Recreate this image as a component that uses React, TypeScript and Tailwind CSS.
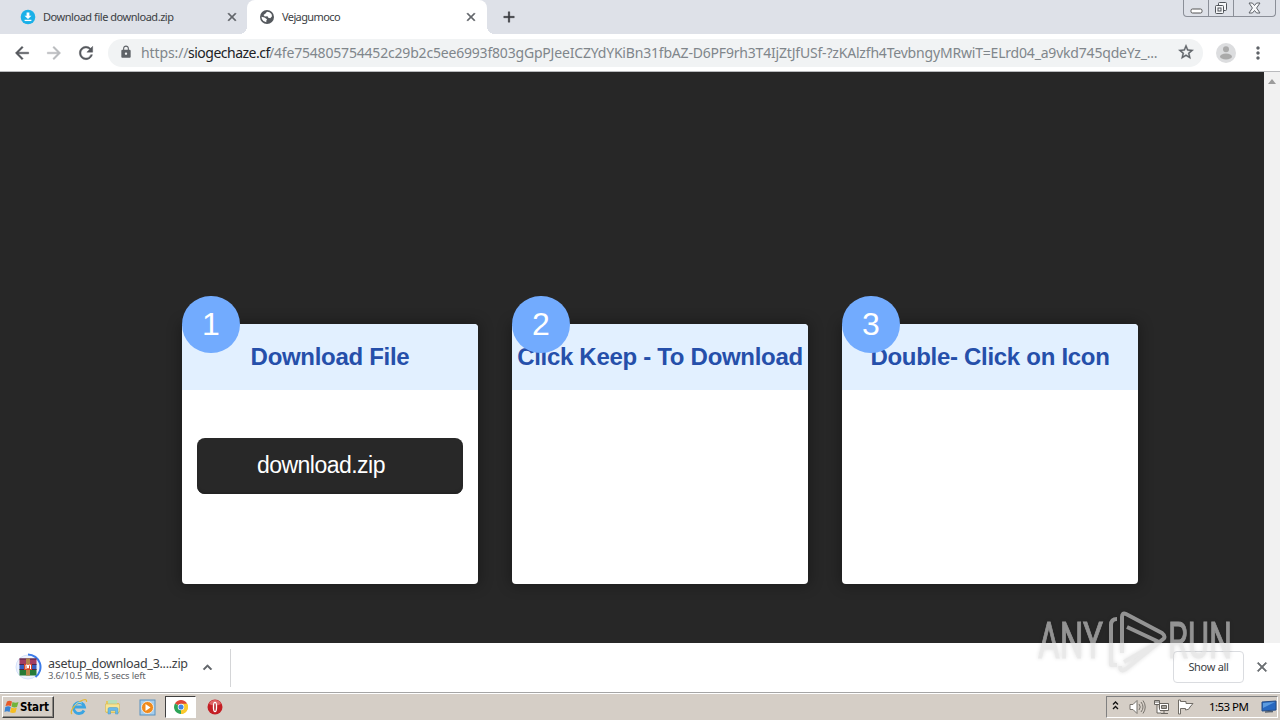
import React from "react";
import {
  MdAdd,
  MdArrowBack,
  MdArrowForward,
  MdClose,
  MdKeyboardArrowUp,
  MdLock,
  MdMoreVert,
  MdRefresh,
  MdStarBorder,
} from "react-icons/md";

const steps = [
  { number: 1, title: "Download File", file: "download.zip" },
  { number: 2, title: "Click Keep - To Download" },
  { number: 3, title: "Double- Click on Icon" },
];

const GlobeIcon = () => (
  <svg width="14" height="14" viewBox="0 0 14 14" className="shrink-0">
    <circle cx="7" cy="7" r="7" fill="#55595e" />
    <path d="M7 1.800 5.500 3.500 3.500 5l1.300 1.500L7.500 6.300l.8 1.500 2 .5 1.700-2L11.500 4 9.500 2.200z" fill="#fff" />
    <path d="m1.500 6.800 3 .8 2.500 1.700-.7 1.400v1.600L3.400 11 1.900 9z" fill="#fff" />
  </svg>
);

const DownloadFavicon = () => (
  <svg width="16" height="16" viewBox="0 0 16 16" className="shrink-0">
    <circle cx="8" cy="8" r="7.3" fill="#1ab0e8" />
    <path d="M6.6 3.5h2.8v3.2h2.1L8 10 4.5 6.7h2.1z" fill="#fff" />
    <path d="M4.6 11.4h6.8" stroke="#fff" strokeWidth="1.3" />
  </svg>
);

const WindowControls = () => (
  <div className="flex h-[17px] w-[93px] rounded-b-[4px] border border-t-0 border-[#8b8f98]">
    <div className="flex w-[25px] items-end justify-center border-r border-[#8b8f98] pb-[2px]">
      <svg width="13" height="6" viewBox="0 0 13 6">
        <rect x="1" y="1" width="11" height="4" rx="1.5" fill="#fff" stroke="#555" />
      </svg>
    </div>
    <div className="flex w-[25px] items-end justify-center border-r border-[#8b8f98] pb-[1px]">
      <svg width="14" height="14" viewBox="0 0 14 14" fill="#f6f7f9" stroke="#50545a">
        <rect x="4.5" y="1.5" width="8" height="8" rx="1" />
        <rect x="1.5" y="4.5" width="8" height="8" rx="1" />
        <rect x="4" y="7" width="3" height="3" />
      </svg>
    </div>
    <div className="flex flex-1 items-center justify-center">
      <svg width="13" height="12" viewBox="0 0 13 12">
        <path
          d="M1 1h3.4l2.1 2.5L8.6 1H12L8.6 6 12 11H8.6L6.5 8.5 4.4 11H1l3.4-5z"
          fill="#f6f7f9"
          stroke="#60646a"
          strokeWidth="1"
        />
      </svg>
    </div>
  </div>
);

const TabStrip = () => (
  <div className="flex h-[34px] bg-[#dee1e8]">
    <div className="flex w-[247px] items-center pl-[20px]">
      <DownloadFavicon />
      <span className="ml-[7px] w-[182px] text-[11px] tracking-[-0.46px] text-[#3c4043]">
        Download file download.zip
      </span>
      <MdClose className="h-[14px] w-[14px] stroke-current stroke-1 text-[#5f6368] [&>path[fill=none]]:stroke-none" />
    </div>
    <div className="relative flex w-[240px] items-center rounded-t-[8px] bg-white pl-[13px]">
      <span className="absolute bottom-0 -left-2 h-2 w-2 bg-[radial-gradient(circle_at_0_0,transparent_8px,white_8px)]" />
      <span className="absolute -right-2 bottom-0 h-2 w-2 bg-[radial-gradient(circle_at_100%_0,transparent_8px,white_8px)]" />
      <GlobeIcon />
      <span className="ml-[8px] w-[182px] text-[11px] tracking-[-0.6px] text-[#3c4043]">
        Vejagumoco
      </span>
      <MdClose className="h-[14px] w-[14px] stroke-current stroke-1 text-[#5f6368] [&>path[fill=none]]:stroke-none" />
    </div>
    <MdAdd className="mt-[8px] ml-[13px] h-[18px] w-[18px] stroke-current stroke-[0.5] text-[#35363a] [&>path[fill=none]]:stroke-none" />
    <div className="mr-[4px] ml-auto">
      <WindowControls />
    </div>
  </div>
);

const Toolbar = () => (
  <div className="flex h-[38px] items-center border-b border-[#b9babd] bg-white">
    <MdArrowBack className="ml-[12px] h-5 w-5 stroke-current stroke-[0.5] text-[#55585d] [&>path[fill=none]]:stroke-none" />
    <MdArrowForward className="ml-[12px] h-5 w-5 stroke-current stroke-[0.5] text-[#b9bbbe] [&>path[fill=none]]:stroke-none" />
    <MdRefresh className="ml-[12px] h-5 w-5 stroke-current stroke-[0.5] text-[#55585d] [&>path[fill=none]]:stroke-none" />
    <div className="ml-[12px] flex h-[28px] w-[1095px] items-center rounded-full bg-[#f1f3f4] pb-px pl-[11px] text-[14px] whitespace-nowrap text-[#80868b]">
      <MdLock className="h-[14px] w-[14px] text-[#5f6368]" />
      <span className="ml-[8px] w-[47px] tracking-[-0.1px]">https://</span>
      <span className="w-[81px] tracking-[-0.5px] text-[#202124]">siogechaze.cf</span>
      <span className="w-[908px] tracking-[-0.19px]">
        /4fe754805754452c29b2c5ee6993f803gGpPJeeICZYdYKiBn31fbAZ-D6PF9rh3T4IjZtJfUSf-?zKAlzfh4TevbngyMRwiT=ELrd04_a9vkd745qdeYz_...
      </span>
      <MdStarBorder className="h-[18px] w-[18px] stroke-current stroke-[0.5] text-[#5f6368] [&>path[fill=none]]:stroke-none" />
    </div>
    <svg width="20" height="20" viewBox="0 0 20 20" className="ml-[13px]">
      <circle cx="10" cy="10" r="10" fill="#dcdddf" />
      <circle cx="10" cy="6.3" r="3" fill="#aaa" />
      <ellipse cx="10" cy="13.5" rx="6" ry="3" fill="#aaa" />
    </svg>
    <MdMoreVert className="ml-[12px] h-5 w-5 text-[#5f6368]" />
  </div>
);

const StepCard = ({ number, title, file }: { number: number; title: string; file?: string }) => (
  <div className="relative h-[260px] w-[296px] rounded-[4px] bg-white shadow-[0_0_14px_2px_rgba(0,0,0,0.3)]">
    <div className="flex h-[66px] items-center justify-center rounded-t-[4px] bg-[#e2f0ff] text-[24px] font-bold tracking-[-0.3px] whitespace-nowrap text-[#254faa]">
      {title}
    </div>
    <div className="absolute -top-[28px] left-0 flex h-[57px] w-[58px] items-center justify-center rounded-full bg-[#72abfe] pb-[2px] text-[32px] text-white">
      {number}
    </div>
    {file && (
      <button className="mt-[48px] ml-[15px] flex h-[56px] w-[266px] items-center rounded-[8px] bg-[#282828] pb-[2px] pl-[60px] text-[23px] tracking-[-0.53px] text-white shadow-[inset_0_-2px_2px_#222222]">
        {file}
      </button>
    )}
  </div>
);

const Watermark = () => (
  <svg
    width="200"
    height="68"
    viewBox="0 0 200 68"
    className="absolute top-[606px] left-[1036px] drop-shadow-[0_0_2px_rgba(0,0,0,0.2)]"
    fill="#dcdcdc"
    opacity="0.6"
    fontFamily="Roboto"
    fontSize="50"
  >
    <g stroke="#dcdcdc" strokeWidth="1">
      <text x="2" y="52" textLength="65" lengthAdjust="spacingAndGlyphs">ANY</text>
      <text x="132" y="52" textLength="64" lengthAdjust="spacingAndGlyphs">RUN</text>
    </g>
    <path
      d="M81 13q-6 0-6 6v40h6M86 47V11q0-5 4-3l36 19q5 4 0 7L90 63q-6 4-6-3M91 21l32 15-35 20"
      fill="none"
      stroke="#dcdcdc"
      strokeWidth="4"
      strokeLinejoin="round"
    />
  </svg>
);

const WinRarIcon = () => (
  <svg width="28" height="28" viewBox="0 0 28 28" className="-mt-[2px]">
    <circle cx="14" cy="14" r="12" fill="#edf2fc" stroke="#d5e2fb" strokeWidth="1" />
    <path d="M14 1.500A12.500 12.500 0 0 1 21.500 24" fill="none" stroke="#3b7bea" strokeWidth="2" />
    <path d="M5.500 5.500h17v5.500h-17z" fill="#a33c61" />
    <path d="M5.500 11h17v5h-17z" fill="#385fc0" />
    <path d="M5.500 16h17v6.500h-17z" fill="#267a37" />
    <path d="M5.500 6h17M5.500 11.500h17M5.500 16.500h17" stroke="#4b2448" strokeWidth="1" />
    <path d="M12 5.500h4v17h-4z" fill="#b58449" />
    <path d="M10 11h8v6h-8z" fill="#d54727" />
    <path d="M12 16v-4h1.500v3h1v-3h2v4" fill="none" stroke="#fff" />
  </svg>
);

const DownloadBar = () => (
  <div className="flex h-[50px] items-center border-b border-[#a5a5a5] bg-white">
    <div className="flex h-[38px] w-[231px] items-center border-r border-[#d4d5d7] pl-[14px]">
      <WinRarIcon />
      <div className="mt-[4px] ml-[6px] w-[151px] whitespace-nowrap">
        <div className="text-[12.5px] leading-[12px] tracking-[-0.28px] text-[#3c4043]">asetup_download_3....zip</div>
        <div className="text-[9.5px] leading-[11px] tracking-[-0.18px] text-[#5f6368]">3.6/10.5 MB, 5 secs left</div>
      </div>
      <MdKeyboardArrowUp className="h-[17px] w-[17px] stroke-current stroke-1 text-[#5f6368] [&>path[fill=none]]:stroke-none" />
    </div>
    <button className="mr-[10px] mb-[2px] ml-auto h-[32px] w-[71px] rounded-[4px] border border-[#dadce0] text-[11px] leading-[30px] tracking-[-0.3px] text-[#3c4043]">
      Show all
    </button>
    <MdClose className="mr-[10px] mb-[2px] h-[16px] w-[16px] stroke-current stroke-1 text-[#6b6f73] [&>path[fill=none]]:stroke-none" />
  </div>
);

const WindowsFlag = () => (
  <svg width="16" height="16" viewBox="0 0 16 16">
    <path d="M3 2.500q2.500-1.500 5 0L7 7Q4.500 6 1.500 7z" fill="#e85a28" />
    <path d="M8.500 3q3 1.500 6 0L13 8q-3 1-5.500-.5z" fill="#72b43a" />
    <path d="M1.300 8q3-1.500 5.500 0l-1.300 5q-2.500-1.500-5 0z" fill="#3a83d3" />
    <path d="M7.300 8.500q2.700 1.300 5.500.3l-1.300 4.700q-3 1-5.500-.3z" fill="#f5bd22" />
  </svg>
);

const InternetExplorerIcon = () => (
  <svg width="18" height="18" viewBox="0 0 18 18" fill="none">
    <path d="M14 12.500A5.500 5.500 0 1 1 14.500 9H4.500" stroke="#3ba5e2" strokeWidth="2.8" />
    <path d="M2 16C-1 14 5 5 13 2q4-1.500 3.500 2" stroke="#e3b737" strokeWidth="1.3" />
    <path d="M5 7.500A5 5 0 0 1 12 5" stroke="#8dd5f7" strokeWidth="1" />
  </svg>
);

const FolderIcon = () => (
  <svg width="18" height="18" viewBox="0 0 18 18">
    <path d="M2 3h5l1 2h7v10H2z" fill="#e4c760" />
    <path d="M4 2h9v5H4z" fill="#b8dfbb" />
    <path d="M1.500 6h14v8h-14z" fill="#f7e594" stroke="#d3b552" strokeWidth=".6" />
    <path d="M4 16v-5q0-1.500 1.500-1.500h7Q14 9.500 14 11v5h-2.500v-3.500h-5V16z" fill="#69b9e8" stroke="#4a98c5" strokeWidth=".5" />
  </svg>
);

const MediaPlayerIcon = () => (
  <svg width="17" height="17" viewBox="0 0 17 17">
    <rect x="1" y="1" width="15" height="15" fill="#a5cdec" stroke="#5b92bf" />
    <circle cx="8.5" cy="8.5" r="6" fill="#f08a1c" stroke="#fff" strokeWidth=".7" />
    <path d="m6.500 5 5 3.500-5 3.500z" fill="#fff" />
  </svg>
);

const ChromeIcon = () => (
  <svg width="14" height="14" viewBox="0 0 16 16">
    <path d="M8 8 1.100 4A8 8 0 0 1 14.900 4z" fill="#df4636" />
    <path d="M8 8 14.900 4A8 8 0 0 1 8 16z" fill="#fbc92d" />
    <path d="M8 8v8A8 8 0 0 1 1.100 4z" fill="#2da457" />
    <path d="M8 4.300h7A8 8 0 0 1 8 16l3.200-6z" fill="#fbc92d" />
    <circle cx="8" cy="8" r="3.7" fill="#fff" />
    <circle cx="8" cy="8" r="2.9" fill="#4285e4" />
  </svg>
);

const OperaIcon = () => (
  <svg width="16" height="16" viewBox="0 0 16 16">
    <circle cx="8" cy="8" r="7.5" fill="#c41e24" />
    <path d="M2 5a6.500 6.500 0 0 1 12 0q-6 3-12 0" fill="#df6466" />
    <ellipse cx="8" cy="8" rx="2.2" ry="5.3" fill="#fff" />
    <ellipse cx="8" cy="8" rx=".8" ry="4" fill="#b01a20" />
  </svg>
);

const Tray = () => (
  <div className="mr-[2px] ml-auto flex h-[22px] w-[172px] items-center border border-t-[#808080] border-r-white border-b-white border-l-[#808080]">
    <svg width="7" height="11" viewBox="0 0 7 11" className="mb-[3px] ml-[5px]" fill="none" stroke="#111" strokeWidth="1.3">
      <path d="m1 4.500 2.500-2.500L6 4.500M1 9l2.500-2.500L6 9" />
    </svg>
    <svg width="17" height="16" viewBox="0 0 17 16" className="ml-[10px]" fill="#fff" stroke="#77736d">
      <path d="M1 5.500h3l4-4v13l-4-4H1z" />
      <path d="M10 5q2.500 3 0 6M12 3q4 5 0 10M14 1.500q4.500 6.500 0 13" fill="none" />
    </svg>
    <svg width="17" height="16" viewBox="0 0 17 16" className="ml-[7px]" fill="#fff" stroke="#68645f">
      <path d="M6.500 4.500h9v7h-9zM8 14.500h7M11 12v2" />
      <path d="M8.500 6.500h5v3h-5z" fill="#a7a49e" />
      <path d="M1.500 1.500h5v4h-5zM3 1v3M5 1v3M4 6v8h4" />
    </svg>
    <svg width="17" height="16" viewBox="0 0 17 16" className="ml-[7px]" fill="#fff" stroke="#706c66">
      <path d="M1.500 1v14h2V9.500h5V11q4 0 4.500-3l3-3.500H9V2.500H3.500V1z" />
    </svg>
    <span className="ml-[15px] w-[52px] text-[11.5px] tracking-[-0.55px] whitespace-nowrap text-black">
      1:53 PM
    </span>
    <svg width="16" height="14" viewBox="0 0 16 14" className="shrink-0">
      <path d="m1 2 14-1v9L1 11z" fill="#2768c0" stroke="#244c86" />
      <path d="m2 3 12-1L2 8z" fill="#5c9bdf" />
      <path d="m4 12 8-.500" stroke="#56616f" strokeWidth="1.5" />
    </svg>
  </div>
);

const Taskbar = () => (
  <div className="flex h-[27px] items-center border-t border-white bg-[#d5cec6]">
    <button className="ml-[2px] flex h-[22px] w-[52px] items-center border border-t-white border-r-[#404040] border-b-[#404040] border-l-white pl-px font-['DejaVu_Sans_Condensed','DejaVu_Sans',sans-serif] text-[11.5px] font-bold tracking-[-0.15px] text-black shadow-[inset_-1px_-1px_#8c8882]">
      <WindowsFlag />
      <span className="pt-px">Start</span>
    </button>
    <div className="ml-[16px] flex items-center">
      <div className="flex w-[18px] justify-center"><InternetExplorerIcon /></div>
      <div className="ml-[16px] flex w-[18px] justify-center"><FolderIcon /></div>
      <div className="ml-[16px] flex w-[18px] justify-center"><MediaPlayerIcon /></div>
      <div className="ml-[9px] flex h-[22px] w-[31px] items-center justify-center border border-t-[#404040] border-r-white border-b-white border-l-[#404040] bg-white">
        <ChromeIcon />
      </div>
      <div className="ml-[9px] flex w-[20px] justify-center"><OperaIcon /></div>
    </div>
    <Tray />
  </div>
);

export default function App() {
  return (
    <div className="relative flex h-[720px] w-[1280px] flex-col overflow-hidden bg-white font-['Noto_Sans',sans-serif]">
      <TabStrip />
      <Toolbar />
      <div className="flex h-[571px] bg-[#272727]">
        <main className="flex w-[1264px] gap-[34px] pt-[252px] pl-[182px] font-['Liberation_Sans',sans-serif]">
          {steps.map((step) => (
            <StepCard key={step.number} {...step} />
          ))}
        </main>
        <div className="flex w-[16px] justify-center bg-[#f1f1f1] pt-[7px]">
          <svg width="8" height="5" viewBox="0 0 8 5">
            <path d="m0 5 4-5 4 5z" fill="#9b9b9b" />
          </svg>
        </div>
      </div>
      <DownloadBar />
      <Taskbar />
      <Watermark />
    </div>
  );
}
